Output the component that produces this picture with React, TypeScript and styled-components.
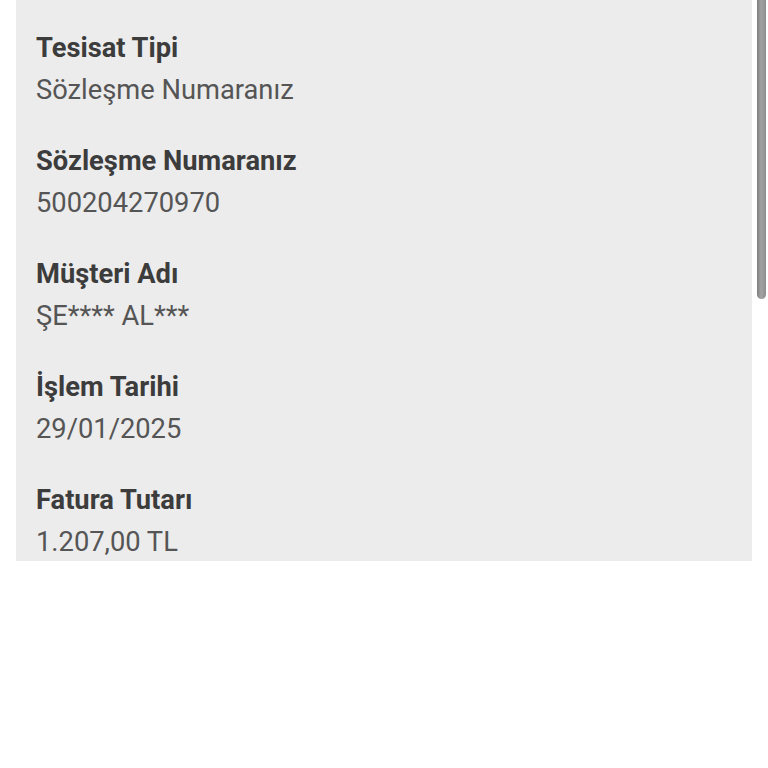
import React from "react";
import styled, { createGlobalStyle } from "styled-components";

const GlobalStyle = createGlobalStyle`
  html, body {
    margin: 0;
    padding: 0;
    background: #ffffff;
    font-family: Roboto, "Noto Sans", sans-serif;
  }
`;

const Page = styled.div`
  position: relative;
  width: 768px;
  height: 768px;
  overflow: hidden;
  background: #ffffff;
`;

const Panel = styled.section`
  margin-left: 16px;
  width: 736px;
  background: #ececec;
  padding: 28px 20px 2px;
  box-sizing: border-box;
  display: flex;
  flex-direction: column;
  gap: 34px;
`;

const Field = styled.div`
  display: flex;
  flex-direction: column;
  gap: 5px;
`;

const Label = styled.div`
  font-size: 27.3px;
  line-height: 40px;
  font-weight: 700;
  color: #3c3c3c;
`;

const Value = styled.div`
  font-size: 27.3px;
  line-height: 34px;
  font-weight: 400;
  color: #555555;
`;

const Scrollbar = styled.div`
  position: absolute;
  top: -10px;
  left: 757px;
  width: 9px;
  height: 309px;
  border-radius: 0 0 5px 5px;
  background: linear-gradient(to right, #7d7d7d, #a3a3a3 45%, #8e8e8e);
`;

const fields = [
  { label: "Tesisat Tipi", value: "Sözleşme Numaranız" },
  { label: "Sözleşme Numaranız", value: "500204270970" },
  { label: "Müşteri Adı", value: "ŞE**** AL***" },
  { label: "İşlem Tarihi", value: "29/01/2025" },
  { label: "Fatura Tutarı", value: "1.207,00 TL" },
];

export default function App() {
  return (
    <Page>
      <GlobalStyle />
      <Panel>
        {fields.map((f) => (
          <Field key={f.label}>
            <Label>{f.label}</Label>
            <Value>{f.value}</Value>
          </Field>
        ))}
      </Panel>
      <Scrollbar />
    </Page>
  );
}
